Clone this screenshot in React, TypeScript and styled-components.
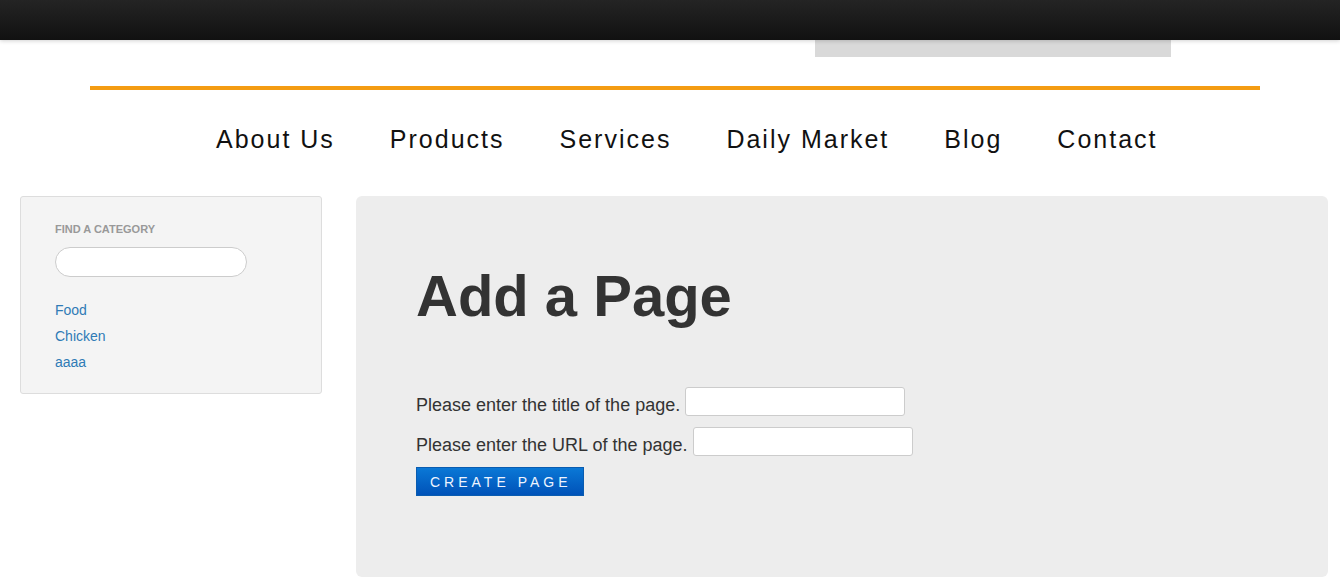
import React from "react";
import styled, { createGlobalStyle } from "styled-components";

const Global = createGlobalStyle`
  html, body { margin: 0; padding: 0; background: #ffffff; }
  body { font-family: "Liberation Sans", Arial, sans-serif; color: #333333; }
  * { box-sizing: border-box; }
`;

const TopBar = styled.div`
  height: 40px;
  background: linear-gradient(#242424, #111111);
  box-shadow: 0 1px 4px rgba(0, 0, 0, 0.18);
  position: relative;
  z-index: 1;
`;

const Header = styled.header`
  width: 1170px;
  margin-left: 90px;
  display: flex;
  flex-direction: column;
`;

const SearchStrip = styled.div`
  margin-left: 725px;
  width: 356px;
  height: 17px;
  background: #d9d9d9;
`;

const OrangeRule = styled.div`
  margin-top: 29px;
  height: 4px;
  background: #f49c12;
`;

const Nav = styled.nav`
  margin-top: 34px;
  padding-left: 126px;
  display: flex;
  gap: 55px;
`;

const NavItem = styled.a`
  font-family: "Liberation Sans", Arial, sans-serif;
  font-size: 25px;
  line-height: 30px;
  letter-spacing: 2px;
  color: #111111;
  text-decoration: none;
`;

const Content = styled.div`
  display: flex;
  align-items: flex-start;
  gap: 34px;
  margin-top: 42px;
  padding: 0 12px 0 20px;
`;

const Sidebar = styled.aside`
  width: 302px;
  flex: none;
  background: #f4f4f4;
  border: 1px solid #dddddd;
  border-radius: 3px;
  padding: 24px 34px 18px;
  display: flex;
  flex-direction: column;
`;

const SideTitle = styled.div`
  font-size: 11px;
  line-height: 16px;
  font-weight: bold;
  color: #999999;
`;

const SearchInput = styled.input`
  margin-top: 10px;
  width: 192px;
  height: 30px;
  border: 1px solid #cccccc;
  border-radius: 15px;
  background: #ffffff;
  outline: none;
`;

const LinkList = styled.div`
  margin-top: 20px;
  display: flex;
  flex-direction: column;
`;

const SideLink = styled.a`
  font-size: 14px;
  line-height: 26px;
  color: #2f7bb6;
  text-decoration: none;
`;

const Main = styled.main`
  flex: 1;
  background: #ededed;
  border-radius: 6px;
  padding: 68px 60px 81px;
`;

const Title = styled.h1`
  margin: 0;
  font-size: 58px;
  line-height: 64px;
  font-weight: bold;
  color: #333333;
`;

const Form = styled.form`
  margin-top: 59px;
  display: flex;
  flex-direction: column;
  gap: 11px;
`;

const Row = styled.div`
  display: flex;
  align-items: flex-start;
  height: 29px;
`;

const Label = styled.label`
  margin-top: 8px;
  font-size: 18px;
  line-height: 20px;
  color: #333333;
  margin-right: 5px;
`;

const TextInput = styled.input`
  width: 220px;
  height: 29px;
  border: 1px solid #cccccc;
  border-radius: 3px;
  background: #ffffff;
  outline: none;
`;

const Button = styled.button`
  align-self: flex-start;
  height: 29px;
  padding: 0 11px 0 13px;
  border: 1px solid #0a5cb0;
  background: linear-gradient(#0a78d6, #0052b8);
  color: #eef4ff;
  font-family: "Liberation Sans", Arial, sans-serif;
  font-size: 14px;
  letter-spacing: 4px;
  cursor: pointer;
`;

const navItems = ["About Us", "Products", "Services", "Daily Market", "Blog", "Contact"];
const categories = ["Food", "Chicken", "aaaa"];

export default function App() {
  return (
    <>
      <Global />
      <TopBar />
      <Header>
        <SearchStrip />
        <OrangeRule />
        <Nav>
          {navItems.map((n) => (
            <NavItem key={n} href="#">
              {n}
            </NavItem>
          ))}
        </Nav>
      </Header>
      <Content>
        <Sidebar>
          <SideTitle>FIND A CATEGORY</SideTitle>
          <SearchInput type="text" />
          <LinkList>
            {categories.map((c) => (
              <SideLink key={c} href="#">
                {c}
              </SideLink>
            ))}
          </LinkList>
        </Sidebar>
        <Main>
          <Title>Add a Page</Title>
          <Form onSubmit={(e) => e.preventDefault()}>
            <Row>
              <Label>Please enter the title of the page.</Label>
              <TextInput type="text" />
            </Row>
            <Row>
              <Label>Please enter the URL of the page.</Label>
              <TextInput type="text" />
            </Row>
            <Button type="submit">CREATE PAGE</Button>
          </Form>
        </Main>
      </Content>
    </>
  );
}
